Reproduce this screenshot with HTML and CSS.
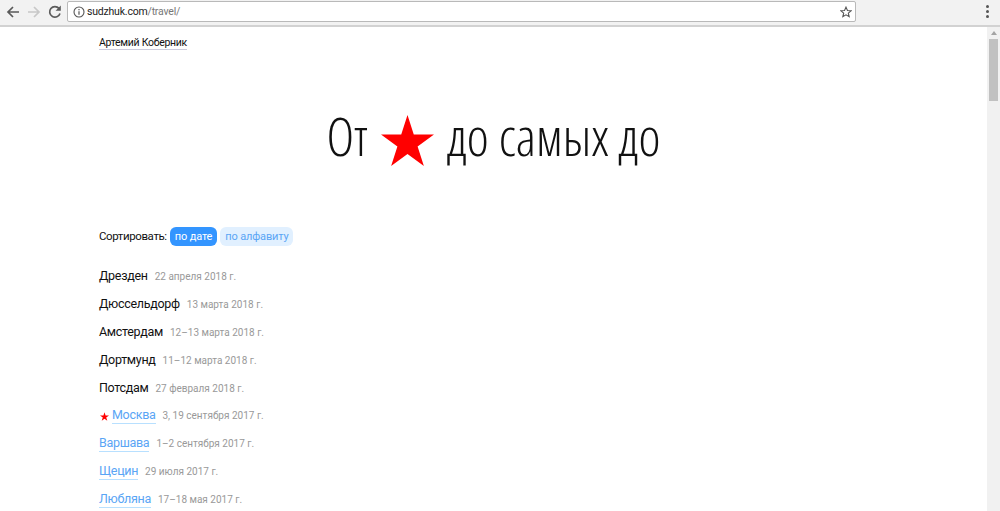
FILE: index.html
```html
<!DOCTYPE html>
<html>
	<head>
		<meta charset="UTF-8">
		<title>От звезды до самых до</title>
		<link rel="stylesheet" href="styles.css">
	</head>
	<body>
		<!--browser toolbar-->
		<div class="toolbar">
			<svg class="tool-icon" width="16" height="16" viewBox="0 0 16 16"><path d="M14 8H3M8 3L3 8l5 5" fill="none" stroke="#5a5a5a" stroke-width="1.7"/></svg>
			<svg class="tool-icon" width="16" height="16" viewBox="0 0 16 16"><path d="M2 8h11M8 3l5 5-5 5" fill="none" stroke="#c8c8c8" stroke-width="1.7"/></svg>
			<svg class="tool-icon" width="16" height="16" viewBox="0 0 16 16"><path d="M13 9.500A5.300 5.300 0 1 1 12 4.400" fill="none" stroke="#5a5a5a" stroke-width="1.700"/><path d="M13.800 1.500v5.200H8.600z" fill="#5a5a5a"/></svg>
			<div class="address">
				<svg class="info" width="12" height="12" viewBox="0 0 12 12"><circle cx="6" cy="6" r="5" fill="none" stroke="#555" stroke-width="1.100"/><path d="M6 5.200v3.600M6 3v1.300" stroke="#555" stroke-width="1.200"/></svg>
				<span class="url">sudzhuk.com<span class="url-path">/travel/</span></span>
				<svg class="bookmark" width="12" height="12" viewBox="0 0 14 14"><path d="M7 1.300l1.700 3.900 4.200.4-3.200 2.800 1 4.100L7 10.300l-3.700 2.200 1-4.100L1.100 5.600l4.200-.4z" fill="none" stroke="#555" stroke-width="1.300"/></svg>
			</div>
			<div class="menu"><i></i><i></i><i></i></div>
		</div>

		<div class="window">
			<div class="page">
				<div class="author"><a href="#">Артемий Коберник</a></div>
				<h1>От <svg class="title-star" viewBox="0 0 54 52"><path d="M27 0l6.400 19.800H54L37.300 32 43.700 52 27 39.700 10.300 52 16.700 32 0 19.800h20.600z"/></svg> до самых до</h1>

				<div class="sort">
					<span class="sort-label">Сортировать:</span>
					<span class="pill on">по дате</span>
					<span class="pill">по алфавиту</span>
				</div>

				<div class="trip"><span class="city">Дрезден</span><span class="date">22 апреля 2018 г.</span></div>
				<div class="trip"><span class="city">Дюссельдорф</span><span class="date">13 марта 2018 г.</span></div>
				<div class="trip"><span class="city">Амстердам</span><span class="date">12–13 марта 2018 г.</span></div>
				<div class="trip"><span class="city">Дортмунд</span><span class="date">11–12 марта 2018 г.</span></div>
				<div class="trip"><span class="city">Потсдам</span><span class="date">27 февраля 2018 г.</span></div>
				<div class="trip"><svg class="home-star" viewBox="0 0 54 52"><path d="M27 0l6.400 19.800H54L37.300 32 43.700 52 27 39.700 10.300 52 16.700 32 0 19.800h20.600z"/></svg><a class="city link" href="#">Москва</a><span class="date">3, 19 сентября 2017 г.</span></div>
				<div class="trip"><a class="city link" href="#">Варшава</a><span class="date">1–2 сентября 2017 г.</span></div>
				<div class="trip"><a class="city link" href="#">Щецин</a><span class="date">29 июля 2017 г.</span></div>
				<div class="trip"><a class="city link" href="#">Любляна</a><span class="date">17–18 мая 2017 г.</span></div>
			</div>

			<!--scrollbar-->
			<div class="scrollbar">
				<div class="arrow-up"></div>
				<div class="thumb"></div>
			</div>
		</div>
	</body>
</html>
```

FILE: styles.css
```css
*{
	margin: 0;
	padding: 0;
	box-sizing: border-box;
}

html, body{
	height: 100%;
	overflow: hidden;
}

body{
	display: flex;
	flex-direction: column;
	font-family: Roboto, sans-serif;
	color: #111;
	background-color: #fff;
}

/*browser toolbar*/
.toolbar{
	height: 27px;
	flex: none;
	display: flex;
	align-items: center;
	padding: 0 0 2px 5px;
	background-color: #f2f2f2;
	border-bottom: 2px solid #d2d2d2;
}

.tool-icon{
	margin-right: 5px;
	flex: none;
}

.address{
	width: 789px;
	height: 21px;
	margin-left: -1px;
	display: flex;
	align-items: center;
	padding: 0 3px;
	background-color: #fff;
	border: 1px solid #b9b9b9;
	border-radius: 2px;
}

.info{
	margin-left: 2px;
}

.url{
	margin-left: 2px;
	font-size: 10.5px;
	letter-spacing: -.2px;
	color: #222;
}

.url-path{
	color: #777;
}

.bookmark{
	margin-left: auto;
}

.menu{
	margin-left: auto;
	margin-right: 11px;
	display: flex;
	flex-direction: column;
	gap: 2px;
}

.menu i{
	width: 3px;
	height: 3px;
	background-color: #555;
	border-radius: 50%;
}

/*page*/
.window{
	flex: 1;
	display: flex;
	min-height: 0;
}

.page{
	flex: 1;
	padding: 0 99px;
	overflow: hidden;
}

.author{
	margin-top: 8px;
	font-size: 10.5px;
	letter-spacing: -.3px;
	line-height: 16px;
}

.author a{
	color: #111;
	text-decoration: none;
	border-bottom: 1px solid #ccd;
}

h1{
	margin-top: 46px;
	height: 78px;
	font-family: "Open Sans", sans-serif;
	font-stretch: condensed;
	font-weight: 300;
	font-size: 52.5px;
	line-height: 78px;
	text-align: center;
	color: #111;
}

.title-star{
	width: 53px;
	height: 51px;
	margin: 0 3.5px;
	vertical-align: -10px;
	fill: #f00;
}

.sort{
	margin-top: 52px;
	display: flex;
	align-items: center;
	gap: 3px;
	font-size: 11.5px;
	line-height: 19px;
}

.sort-label{
	letter-spacing: -.4px;
}

.pill{
	padding: 0 5px;
	font-size: 11px;
	letter-spacing: -.15px;
	color: #5aa5f5;
	background-color: #e1f0ff;
	border-radius: 6px;
}

.pill.on{
	color: #fff;
	background-color: #3395ff;
}

.trip{
	display: flex;
	align-items: baseline;
	height: 28px;
	line-height: 24px;
}

.sort + .trip{
	margin-top: 18px;
}

.city{
	font-size: 12.5px;
	letter-spacing: -.3px;
	color: #111;
}

.link{
	line-height: 17px;
	color: #5aa5f5;
	text-decoration: none;
	border-bottom: 1px solid #b8e0ff;
}

.date{
	margin-left: 7px;
	font-size: 10px;
	color: #999;
}

.home-star{
	width: 9px;
	height: 9px;
	margin: 0 3px 4px 1px;
	fill: #f00;
	align-self: center;
}

/*scrollbar*/
.scrollbar{
	width: 13px;
	flex: none;
	background-color: #f1f1f1;
}

.arrow-up{
	width: 0;
	height: 0;
	margin: 4px auto 4px;
	border-left: 3px solid transparent;
	border-right: 3px solid transparent;
	border-bottom: 4px solid #a3a3a3;
}

.thumb{
	width: 9px;
	height: 62px;
	margin-left: 2px;
	background-color: #c1c1c1;
}
```
